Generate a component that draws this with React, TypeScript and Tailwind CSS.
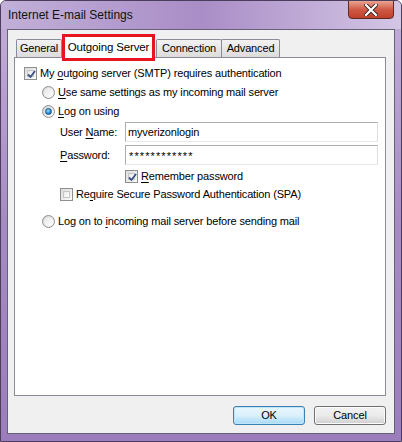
import React from "react";

const font = { fontFamily: '"Liberation Sans", Arial, sans-serif' };

function Check({ checked }: { checked?: boolean }) {
  return (
    <div className="w-[13px] h-[13px] border border-[#8e8f8f] bg-gradient-to-br from-[#dcdcdc] to-[#fbfbfb] p-[2px] shrink-0">
      <div className="w-full h-full border border-[#c5c5c5] bg-gradient-to-br from-[#e8e8e8] to-[#ffffff] relative">
        {checked && (
          <svg viewBox="0 0 9 9" className="absolute -left-[1px] -top-[1px] w-[9px] h-[9px]">
            <path d="M1 4.5 L3.5 7 L8 1" stroke="#3c4f8c" strokeWidth="1.8" fill="none" />
          </svg>
        )}
      </div>
    </div>
  );
}

function Radio({ checked }: { checked?: boolean }) {
  return (
    <div className="w-[13px] h-[13px] rounded-full border border-[#8e8f8f] bg-gradient-to-br from-[#d4d4d4] to-[#fdfdfd] flex items-center justify-center shrink-0">
      {checked ? (
        <div className="w-[7px] h-[7px] rounded-full bg-[radial-gradient(circle_at_40%_35%,#9ce0ff_0%,#2a8ad6_55%,#134f8a_100%)] border border-[#1b5a8c]" />
      ) : (
        <div className="w-[9px] h-[9px] rounded-full bg-gradient-to-br from-[#e4e4e4] to-[#ffffff]" />
      )}
    </div>
  );
}

function U({ children }: { children: React.ReactNode }) {
  return <span className="underline underline-offset-[2px]">{children}</span>;
}

export default function App() {
  return (
    <div
      className="w-[402px] h-[442px] flex flex-col rounded-t-[6px] bg-gradient-to-b from-[#c3afd9] via-[#a68bc3] to-[#9b7dbb] border border-[#4b3d5c] overflow-hidden text-black"
      style={font}
    >
      {/* Title bar */}
      <div className="relative h-[28px] shrink-0 flex items-center pl-[7px] bg-gradient-to-r from-[#c2b0d8] via-[#a98dc6] to-[#d4c6e5]">
        <span className="text-[12px] text-[#111]">Internet E-mail Settings</span>
        <div className="absolute right-[7px] top-[-1px] w-[46px] h-[19px] rounded-b-[4px] border border-[#5b2b25] bg-gradient-to-b from-[#e8a393] via-[#cf5a45] to-[#c0402b] flex items-center justify-center">
          <svg viewBox="0 0 14 12" className="w-[14px] h-[12px]">
            <path d="M2 1 L12 11 M12 1 L2 11" stroke="#3a2320" strokeWidth="4" strokeLinecap="square" />
            <path d="M2 1 L12 11 M12 1 L2 11" stroke="#ffffff" strokeWidth="2.2" strokeLinecap="square" />
          </svg>
        </div>
      </div>

      {/* Client area */}
      <div className="flex-1 mx-[6px] mb-[7px] border border-[#66607a] bg-[#f0f0f0] flex flex-col pt-[6px] pl-[6px] pr-[8px] text-[11px] tracking-[-0.15px]">
        {/* Tabs */}
        <div className="h-[21px] flex items-end pl-[2px] relative z-10">
          <div className="h-[18px] w-[46px] border border-[#898c95] border-b-0 bg-gradient-to-b from-[#f2f2f2] to-[#dcdcdc] flex items-center justify-center rounded-t-[2px]">
            General
          </div>
          <div className="relative h-[22px] w-[93px] bg-white border border-[#898c95] border-b-0 flex items-center justify-center -mb-px text-[11.5px]">
            Outgoing Server
            <div className="absolute left-[-1px] right-[-1px] top-[-3px] bottom-[-3px] border-[3px] border-[#e8141f]" />
          </div>
          <div className="h-[18px] w-[66px] border border-[#898c95] border-b-0 bg-gradient-to-b from-[#f2f2f2] to-[#dcdcdc] flex items-center justify-center rounded-t-[2px] ml-[1px]">
            Connection
          </div>
          <div className="h-[18px] w-[59px] -ml-px border border-[#898c95] border-b-0 bg-gradient-to-b from-[#f2f2f2] to-[#dcdcdc] flex items-center justify-center rounded-t-[2px]">
            Advanced
          </div>
        </div>

        {/* Panel */}
        <div className="h-[339px] bg-white border border-[#898c95] pt-[6px] flex flex-col">
          <div className="h-[19px] flex items-center gap-[3px] pl-[9px]">
            <Check checked />
            <span>My <U>o</U>utgoing server (SMTP) requires authentication</span>
          </div>
          <div className="h-[19px] flex items-center gap-[3px] pl-[27px]">
            <Radio />
            <span><U>U</U>se same settings as my incoming mail server</span>
          </div>
          <div className="h-[19px] flex items-center gap-[3px] pl-[27px]">
            <Radio checked />
            <span><U>L</U>og on using</span>
          </div>
          <div className="h-[20px] mt-[1px] flex items-center pl-[45px]">
            <span className="w-[65px]">User <U>N</U>ame:</span>
            <div className="w-[253px] h-[20px] border border-[#abadb3] border-r-[#dbdfe6] border-b-[#e3e9ef] flex items-center pl-[2px]">
              myverizonlogin
            </div>
          </div>
          <div className="h-[20px] mt-[3px] flex items-center pl-[45px]">
            <span className="w-[65px]"><U>P</U>assword:</span>
            <div className="w-[253px] h-[20px] border border-[#abadb3] border-r-[#dbdfe6] border-b-[#e3e9ef] flex items-start pt-[2px] pl-[3px] text-[11px] tracking-[1.1px]">
              ************
            </div>
          </div>
          <div className="h-[18px] mt-[2px] flex items-center gap-[3px] pl-[110px]">
            <Check checked />
            <span><U>R</U>emember password</span>
          </div>
          <div className="h-[18px] flex items-center gap-[3px] pl-[45px]">
            <Check />
            <span>Re<U>q</U>uire Secure Password Authentication (SPA)</span>
          </div>
          <div className="h-[19px] mt-[9px] flex items-center gap-[3px] pl-[27px]">
            <Radio />
            <span>Log on to <U>i</U>ncoming mail server before sending mail</span>
          </div>
        </div>

        {/* Buttons */}
        <div className="flex justify-end gap-[9px] mt-[10px]">
          <div className="w-[72px] h-[19px] rounded-[3px] border border-[#3c7fb1] bg-gradient-to-b from-[#eaf6fd] via-[#d9f0fc] to-[#a7d9f5] shadow-[inset_0_0_0_1px_#c0e5fa] flex items-center justify-center">
            OK
          </div>
          <div className="w-[72px] h-[19px] rounded-[3px] border border-[#707070] bg-gradient-to-b from-[#f2f2f2] via-[#ebebeb] to-[#cfcfcf] shadow-[inset_0_0_0_1px_#fcfcfc] flex items-center justify-center">
            Cancel
          </div>
        </div>
      </div>
    </div>
  );
}
